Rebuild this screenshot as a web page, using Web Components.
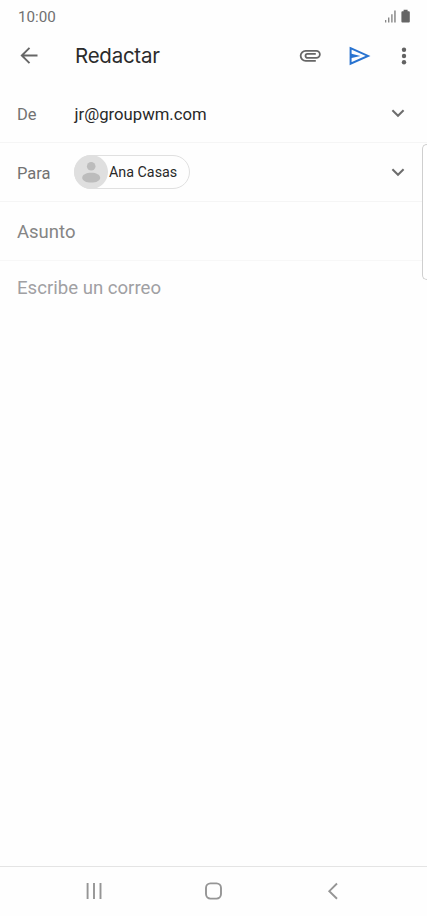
<!DOCTYPE html>
<html lang="es">
<head>
<meta charset="utf-8">
<title>Redactar</title>
<style>
  html, body { margin: 0; height: 100%; }
  body { background: #fefefe; font-family: Roboto, sans-serif; overflow: hidden; }
</style>
</head>
<body>
<compose-screen></compose-screen>
<script>
class StatusBar extends HTMLElement {
  constructor() {
    super();
    this.attachShadow({ mode: 'open' });
    this.shadowRoot.innerHTML = `
      <style>
        :host { display: flex; justify-content: space-between; align-items: center; height: 33px; padding: 0 16px 0 18px; box-sizing: border-box; color: #707070; font-size: 15.2px; }
        svg { display: block; margin-top: -1px; }
      </style>
      <span><slot></slot></span>
      <svg width="27" height="14" viewBox="0 0 27 14" fill="#666">
        <path d="M1 11h1.300v2.500H1zM4 8.500h1.400v5H4zM7.200 5.300h1.400v8.200H7.200zM10.200 1.500h1.500v12h-1.500z" fill="#888"/>
        <path d="M19.600.8h4v1.400h1.200q1 0 1 1v9.300q0 1-1 1h-6.400q-1 0-1-1V3.200q0-1 1-1h1.200z"/>
      </svg>
    `;
  }
}

class AppBar extends HTMLElement {
  constructor() {
    super();
    this.attachShadow({ mode: 'open' });
    this.shadowRoot.innerHTML = `
      <style>
        :host { display: flex; align-items: center; height: 46px; padding: 0 10px 1px 17px; box-sizing: border-box; }
        svg { display: block; flex: none; }
        h1 { flex: 1; margin: 1px 0 0 33px; font: 400 20.5px/28px Inter, sans-serif; letter-spacing: -.25px; color: #2b2b2b; }
        .send { margin: 0 20px 0 26px; }
      </style>
      <svg width="25" height="25" viewBox="0 0 25 25" fill="none" stroke="#666" stroke-width="1.9"><path d="M20.5 12.500H4.800M12.500 4.800 4.800 12.500l7.700 7.700"/></svg>
      <h1><slot></slot></h1>
      <svg width="25" height="25" viewBox="0 0 25 25" fill="none" stroke="#666" stroke-width="1.8"><path d="M17.800 17.900H7.700a5.050 5.050 0 0 1 0-10.100h10.600a3.500 3.500 0 0 1 0 7.100H9.500a2 2 0 0 1 0-4h8.300"/></svg>
      <svg class="send" width="22" height="20" viewBox="0 0 22 20"><path d="M1.600 2.200 19 9.900 1.600 17.600z" fill="none" stroke="#2873d0" stroke-width="2"/><path d="M1.500 7.600 11.500 9.900 1.500 12.200z" fill="#2873d0"/></svg>
      <svg width="26" height="20" viewBox="0 0 26 20" fill="#626262"><circle cx="13" cy="3.700" r="2.200"/><circle cx="13" cy="10" r="2.200"/><circle cx="13" cy="16.300" r="2.200"/></svg>
    `;
  }
}

class FieldRow extends HTMLElement {
  constructor() {
    super();
    this.attachShadow({ mode: 'open' });
    this.shadowRoot.innerHTML = `
      <style>
        :host { display: flex; align-items: center; height: 59px; padding: 0 22px 0 17px; box-sizing: border-box; border-bottom: 1px solid #f5f5f5; }
        .label { width: 57px; padding-top: 2px; font-size: 16.5px; color: #727272; }
        .value { flex: 1; font-size: 16.7px; color: #292929; }
        ::slotted(span) { display: block; padding: 2px 0 0 .6px; }
        svg { display: block; }
      </style>
      <span class="label"></span>
      <div class="value"><slot></slot></div>
      <svg width="14" height="10" viewBox="0 0 14 10" fill="none" stroke="#6d6d6d" stroke-width="2"><path d="M1.400 2.200 7 7.800 12.600 2.200"/></svg>
    `;
  }

  connectedCallback() {
    this.shadowRoot.querySelector('.label').textContent = this.getAttribute('label');
  }
}

class ContactChip extends HTMLElement {
  constructor() {
    super();
    this.attachShadow({ mode: 'open' });
    this.shadowRoot.innerHTML = `
      <style>
        :host { display: flex; align-items: center; width: 116px; height: 34px; box-sizing: border-box; border: 1px solid #e0e0e0; border-radius: 17px; font-size: 14.3px; }
        svg { display: block; margin-left: -1px; flex: none; }
        span { margin-left: 1px; white-space: nowrap; }
      </style>
      <svg width="34" height="34" viewBox="0 0 34 34"><circle cx="17" cy="17" r="17" fill="#dfdfdf"/><g fill="#bcbcbc"><circle cx="17.200" cy="11.300" r="4.300"/><path d="M8.200 22.700c0-3 4-5 9-5s9 2 9 5-4 4.900-9 4.900-9-1.900-9-4.900z"/></g></svg>
      <span><slot></slot></span>
    `;
  }
}

class TextInput extends HTMLElement {
  constructor() {
    super();
    this.attachShadow({ mode: 'open' });
    this.shadowRoot.innerHTML = `
      <style>
        :host { display: flex; align-items: center; height: 59px; padding: 2px 17px 0; box-sizing: border-box; border-bottom: 1px solid #f7f7f7; font-size: 18.5px; color: #858585; }
        :host([body]) { flex: 1; height: auto; align-items: flex-start; padding-top: 15px; border: 0; line-height: 24px; font-size: 18.6px; color: #a0a0a3; }
      </style>
      <slot></slot>
    `;
  }
}

class NavBar extends HTMLElement {
  constructor() {
    super();
    this.attachShadow({ mode: 'open' });
    this.shadowRoot.innerHTML = `
      <style>
        :host { display: flex; justify-content: space-between; align-items: center; height: 50px; padding: 0 84px 2px; box-sizing: border-box; border-top: 1px solid #e4e4e4; }
        svg { display: block; }
      </style>
      <svg width="20" height="20" viewBox="0 0 20 20" fill="none" stroke="#959595" stroke-width="1.9"><path d="M3.600 2v16M10 2v16M16.500 2v16"/></svg>
      <svg width="20" height="20" viewBox="0 0 20 20" fill="none" stroke="#959595" stroke-width="1.9"><rect x="2" y="2.400" width="15" height="15.200" rx="4.500"/></svg>
      <svg width="20" height="20" viewBox="0 0 20 20" fill="none" stroke="#959595" stroke-width="1.9"><path d="M14 2.500 6.300 10.200 14 17.800"/></svg>
    `;
  }
}

class ComposeScreen extends HTMLElement {
  constructor() {
    super();
    this.attachShadow({ mode: 'open' });
    this.shadowRoot.innerHTML = `
      <style>
        :host { display: flex; flex-direction: column; position: relative; height: 100vh; }
        app-bar { margin-bottom: 5px; }
        /* edge panel handle floats over the form */
        .edge { position: absolute; right: 0; top: 144px; width: 5px; height: 136px; box-sizing: border-box; background: #fff; border: 1px solid #cfcfcf; border-right: 0; border-radius: 5px 0 0 5px; }
      </style>
      <status-bar>10:00</status-bar>
      <app-bar>Redactar</app-bar>
      <field-row label="De"><span>jr@groupwm.com</span></field-row>
      <field-row label="Para"><contact-chip>Ana Casas</contact-chip></field-row>
      <text-input>Asunto</text-input>
      <text-input body>Escribe un correo</text-input>
      <nav-bar></nav-bar>
      <div class="edge"></div>
    `;
  }
}

customElements.define('status-bar', StatusBar);
customElements.define('app-bar', AppBar);
customElements.define('field-row', FieldRow);
customElements.define('contact-chip', ContactChip);
customElements.define('text-input', TextInput);
customElements.define('nav-bar', NavBar);
customElements.define('compose-screen', ComposeScreen);
</script>
</body>
</html>
